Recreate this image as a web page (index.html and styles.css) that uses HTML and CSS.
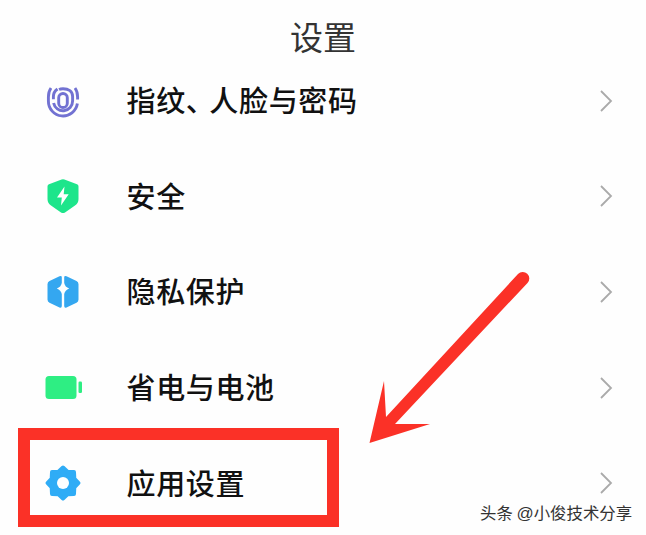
FILE: index.html
```
<!DOCTYPE html>
<html lang="zh-CN">
<head>
<meta charset="utf-8">
<title>设置</title>
<link rel="stylesheet" href="styles.css">
</head>
<body>
<main class="screen">
  <header class="header"><h1 class="title">设置</h1></header>
  <ul class="list">
    <li class="row">
      <svg class="icon" viewBox="0 0 40 40" fill="none" stroke="#7272d2" stroke-width="2.9">
        <path d="M8 7Q5.400 10.500 5.400 16v4a14.600 14.800 0 0 0 29 2.600M34.600 18.400V16Q34.600 10.500 32 7"/>
        <path d="M14.500 8Q10.400 11 10.400 15.500v2.700M10.600 22a9.600 9.800 0 0 0 19-2v-4.500C29.600 10.500 25.500 7.800 20 7.800Q17.500 7.800 16 8.500"/>
        <rect x="15.700" y="12.500" width="8.600" height="14" rx="4.300"/>
      </svg>
      <span class="label">指纹<span class="comma">、</span>人脸与密码</span>
      <svg class="chevron" viewBox="0 0 14 24"><path d="M2 2l10 10L2 22"/></svg>
    </li>
    <li class="row">
      <svg class="icon" viewBox="0 0 40 40">
        <path fill="#1de58b" d="M18.600 3.500Q20 2.800 21.400 3.500L34 8.200Q35.500 8.800 35.500 10.500V23Q35.500 27 32 29.500L22 36.500Q20 37.600 18 36.500L8 29.500Q4.500 27 4.500 23V10.500Q4.500 8.800 6 8.200Z"/>
        <path fill="#fff" d="M21.500 10.500L14 21.500h4.800L18 29.500l7.700-11.300h-5z"/>
      </svg>
      <span class="label">安全</span>
      <svg class="chevron" viewBox="0 0 14 24"><path d="M2 2l10 10L2 22"/></svg>
    </li>
    <li class="row">
      <svg class="icon" viewBox="0 0 40 40" fill="#34a7f0">
        <path id="half" d="M18.800 5.300Q18.800 3.200 16.500 4.200L6.500 9Q4.500 10 4.500 12.200V27.500Q4.500 29.700 6.500 30.700L16.500 35.500Q18.800 36.300 18.800 34V22Q18 18 13.800 16.500Q18 15 18.800 11Z"/>
        <use href="#half" transform="matrix(-1 0 0 1 40 0)"/>
      </svg>
      <span class="label">隐私保护</span>
      <svg class="chevron" viewBox="0 0 14 24"><path d="M2 2l10 10L2 22"/></svg>
    </li>
    <li class="row">
      <svg class="icon" viewBox="0 0 40 40" fill="#2eee83">
        <rect x="2.500" y="8" width="31" height="23" rx="3.500"/>
        <rect x="35.500" y="13.500" width="3.500" height="11.500" rx="1.200"/>
      </svg>
      <span class="label">省电与电池</span>
      <svg class="chevron" viewBox="0 0 14 24"><path d="M2 2l10 10L2 22"/></svg>
    </li>
    <li class="row">
      <svg class="icon" viewBox="0 0 40 40">
        <path fill="#2facf6" stroke="#2facf6" stroke-width="4" stroke-linejoin="round" d="M20 4.500L24.500 8.700L31 9L31.300 15.500L35.500 20L31.300 24.500L31 31L24.500 31.300L20 35.500L15.500 31.300L9 31L8.700 24.500L4.500 20L8.700 15.500L9 9L15.500 8.700Z"/>
        <circle cx="20" cy="20" r="6" fill="#fff"/>
      </svg>
      <span class="label">应用设置</span>
      <svg class="chevron" viewBox="0 0 14 24"><path d="M2 2l10 10L2 22"/></svg>
    </li>
  </ul>
  <div class="highlight"></div>
  <svg class="arrow" viewBox="0 0 190 195">
    <path fill="#fb3127" d="M19.500 183L34 121L36 157L168 14A6.500 6.500 0 0 1 177.500 23L45 164L80 164Z"/>
  </svg>
  <div class="watermark">头条 <span class="at">@</span>小俊技术分享</div>
</main>
</body>
</html>
```
FILE: styles.css
```
* { box-sizing: border-box; }
body {
  margin: 0;
  background: #fff;
  font-family: "Noto Sans CJK SC", sans-serif;
}
.screen {
  position: relative;
  width: 646px;
  height: 535px;
  overflow: hidden;
  background: #fefefe;
}
.header {
  height: 53px;
  padding-top: 13px;
  text-align: center;
}
.title {
  margin: 0;
  font-size: 33px;
  line-height: 46px;
  font-weight: 400;
  color: #333;
}
.list {
  margin: 0;
  padding: 0;
  list-style: none;
}
.row {
  display: flex;
  align-items: center;
  height: 95.6px;
  padding: 0 33px 0 43px;
}
.icon {
  flex: none;
  width: 40px;
  height: 40px;
}
.label {
  flex: 1;
  margin-left: 43.5px;
  padding-bottom: 3px;
  font-size: 29px;
  line-height: 44px;
  font-weight: 500;
  letter-spacing: 0.65px;
  color: #111;
}
.comma { letter-spacing: -5.5px; }
.chevron {
  width: 14px;
  height: 24px;
  fill: none;
  stroke: #aaa;
  stroke-width: 1.8;
}
.highlight {
  position: absolute;
  left: 18px;
  top: 428px;
  width: 321px;
  height: 99px;
  border: 12px solid #fb3127;
}
.arrow {
  position: absolute;
  left: 350px;
  top: 260px;
  width: 190px;
  height: 195px;
}
.watermark {
  position: absolute;
  left: 480px;
  top: 500px;
  font-size: 16.4px;
  line-height: 24px;
  color: #333;
  white-space: nowrap;
}
.at {
  font-family: "Liberation Sans", sans-serif;
  font-size: 17px;
}
```
